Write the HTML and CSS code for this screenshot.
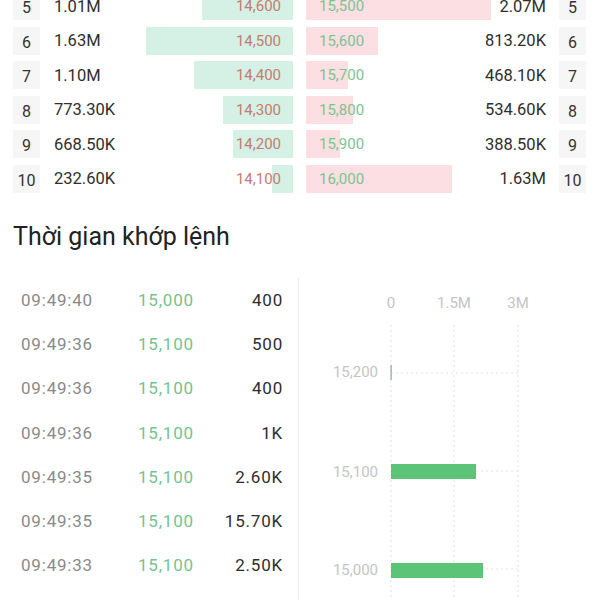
FILE: index.html
```html
<!DOCTYPE html>
<html lang="vi">
<head>
    <meta charset="UTF-8">
    <meta name="viewport" content="width=device-width, initial-scale=1.0">
    <title>Sổ lệnh</title>
    <link rel="stylesheet" href="styles.css">
</head>
<body>
    <!-- Order book: bid on the left, ask on the right -->
    <div class="order-book">
        <div class="book-row">
            <span class="level">5</span>
            <div class="bid" style="--w: 91px"><span class="vol">1.01M</span><span class="price">14,600</span></div>
            <div class="ask" style="--w: 185px"><span class="price">15,500</span><span class="vol">2.07M</span></div>
            <span class="level">5</span>
        </div>
        <div class="book-row">
            <span class="level">6</span>
            <div class="bid" style="--w: 147px"><span class="vol">1.63M</span><span class="price">14,500</span></div>
            <div class="ask" style="--w: 72px"><span class="price">15,600</span><span class="vol">813.20K</span></div>
            <span class="level">6</span>
        </div>
        <div class="book-row">
            <span class="level">7</span>
            <div class="bid" style="--w: 99px"><span class="vol">1.10M</span><span class="price">14,400</span></div>
            <div class="ask" style="--w: 42px"><span class="price">15,700</span><span class="vol">468.10K</span></div>
            <span class="level">7</span>
        </div>
        <div class="book-row">
            <span class="level">8</span>
            <div class="bid" style="--w: 70px"><span class="vol">773.30K</span><span class="price">14,300</span></div>
            <div class="ask" style="--w: 47px"><span class="price">15,800</span><span class="vol">534.60K</span></div>
            <span class="level">8</span>
        </div>
        <div class="book-row">
            <span class="level">9</span>
            <div class="bid" style="--w: 60px"><span class="vol">668.50K</span><span class="price">14,200</span></div>
            <div class="ask" style="--w: 34px"><span class="price">15,900</span><span class="vol">388.50K</span></div>
            <span class="level">9</span>
        </div>
        <div class="book-row">
            <span class="level">10</span>
            <div class="bid" style="--w: 21px"><span class="vol">232.60K</span><span class="price">14,100</span></div>
            <div class="ask" style="--w: 146px"><span class="price">16,000</span><span class="vol">1.63M</span></div>
            <span class="level">10</span>
        </div>
    </div>

    <h2 class="section-title">Thời gian khớp lệnh</h2>

    <div class="matches">
        <!-- Trade list -->
        <div class="trade-list">
            <div class="trade"><span class="time">09:49:40</span><span class="tprice">15,000</span><span class="tvol">400</span></div>
            <div class="trade"><span class="time">09:49:36</span><span class="tprice">15,100</span><span class="tvol">500</span></div>
            <div class="trade"><span class="time">09:49:36</span><span class="tprice">15,100</span><span class="tvol">400</span></div>
            <div class="trade"><span class="time">09:49:36</span><span class="tprice">15,100</span><span class="tvol">1K</span></div>
            <div class="trade"><span class="time">09:49:35</span><span class="tprice">15,100</span><span class="tvol">2.60K</span></div>
            <div class="trade"><span class="time">09:49:35</span><span class="tprice">15,100</span><span class="tvol">15.70K</span></div>
            <div class="trade"><span class="time">09:49:33</span><span class="tprice">15,100</span><span class="tvol">2.50K</span></div>
        </div>

        <!-- Volume by price chart -->
        <div class="chart">
            <svg width="301" height="322" viewBox="0 0 301 322">
                <g class="axis-label">
                    <text x="92" y="30" text-anchor="middle">0</text>
                    <text x="155" y="30" text-anchor="middle">1.5M</text>
                    <text x="219" y="30" text-anchor="middle">3M</text>
                </g>
                <g class="grid">
                    <line x1="92" y1="47" x2="92" y2="322"/>
                    <line x1="155" y1="47" x2="155" y2="322"/>
                    <line x1="219" y1="47" x2="219" y2="322"/>
                    <line x1="92" y1="95" x2="219" y2="95"/>
                    <line x1="92" y1="193" x2="219" y2="193"/>
                    <line x1="92" y1="291" x2="219" y2="291"/>
                </g>
                <g class="price-label">
                    <text x="79" y="99" text-anchor="end">15,200</text>
                    <text x="79" y="199" text-anchor="end">15,100</text>
                    <text x="79" y="297" text-anchor="end">15,000</text>
                </g>
                <rect class="tick-bar" x="91.5" y="87" width="1.2" height="15"/>
                <rect class="vol-bar" x="92" y="186" width="85" height="15"/>
                <rect class="vol-bar" x="92" y="285" width="92" height="15"/>
            </svg>
        </div>
    </div>
</body>
</html>
```

FILE: styles.css
```css
/* Basic reset */
* {
    box-sizing: border-box;
    margin: 0;
    padding: 0;
}

body {
    font-family: Roboto, "Noto Sans", sans-serif;
    background-color: #ffffff;
    color: #333;
    width: 600px;
    height: 600px;
    overflow: hidden;
}

/* Order book */
.order-book {
    margin-top: -8px;
    padding: 0 13px;
}

.book-row {
    display: grid;
    grid-template-columns: 27px 240px 240px 27px;
    column-gap: 13px;
    height: 28px;
    margin-bottom: 6.5px;
}

.level {
    background-color: #f6f6f6;
    display: flex;
    align-items: center;
    justify-content: center;
    padding-top: 3px;
    font-size: 16px;
    color: #333;
}

.bid, .ask {
    display: flex;
    align-items: center;
    justify-content: space-between;
    font-size: 15px;
}

.bid {
    margin-left: 1px;
    padding-right: 12px;
    background: linear-gradient(#d5f0e4, #d5f0e4) right / var(--w) 100% no-repeat;
}

.ask {
    padding-left: 13px;
    background: linear-gradient(#fbdfe2, #fbdfe2) left / var(--w) 100% no-repeat;
}

.vol {
    font-size: 16.5px;
    color: #2e2e2e;
}

.bid .price {
    color: #c87a70;
}

.ask .price {
    color: #7cc393;
}

/* Matched orders */
.section-title {
    font-size: 25px;
    font-weight: normal;
    line-height: 30px;
    color: #222;
    margin: 29.5px 0 0 13px;
}

.matches {
    display: flex;
    margin-top: 25.5px;
}

.trade-list {
    width: 299px;
    border-right: 1px solid #eeeeee;
    padding: 0 15px 0 21px;
}

.trade {
    display: flex;
    align-items: center;
    height: 44.3px;
    font-size: 17px;
    letter-spacing: 0.8px;
}

.time {
    width: 117px;
    color: #8a8a8a;
}

.tprice {
    color: #74c48e;
}

.tvol {
    margin-left: auto;
    color: #2e2e2e;
}

.chart {
    flex: 1;
}

.chart svg {
    display: block;
}

.axis-label text, .price-label text {
    font-family: Roboto, sans-serif;
    font-size: 15px;
    fill: #c4c4c4;
}

.grid line {
    stroke: #e2e2e2;
    stroke-width: 1;
    stroke-dasharray: 2 3;
}

.vol-bar {
    fill: #5cc477;
}

.tick-bar {
    fill: #8aa99a;
}
```
